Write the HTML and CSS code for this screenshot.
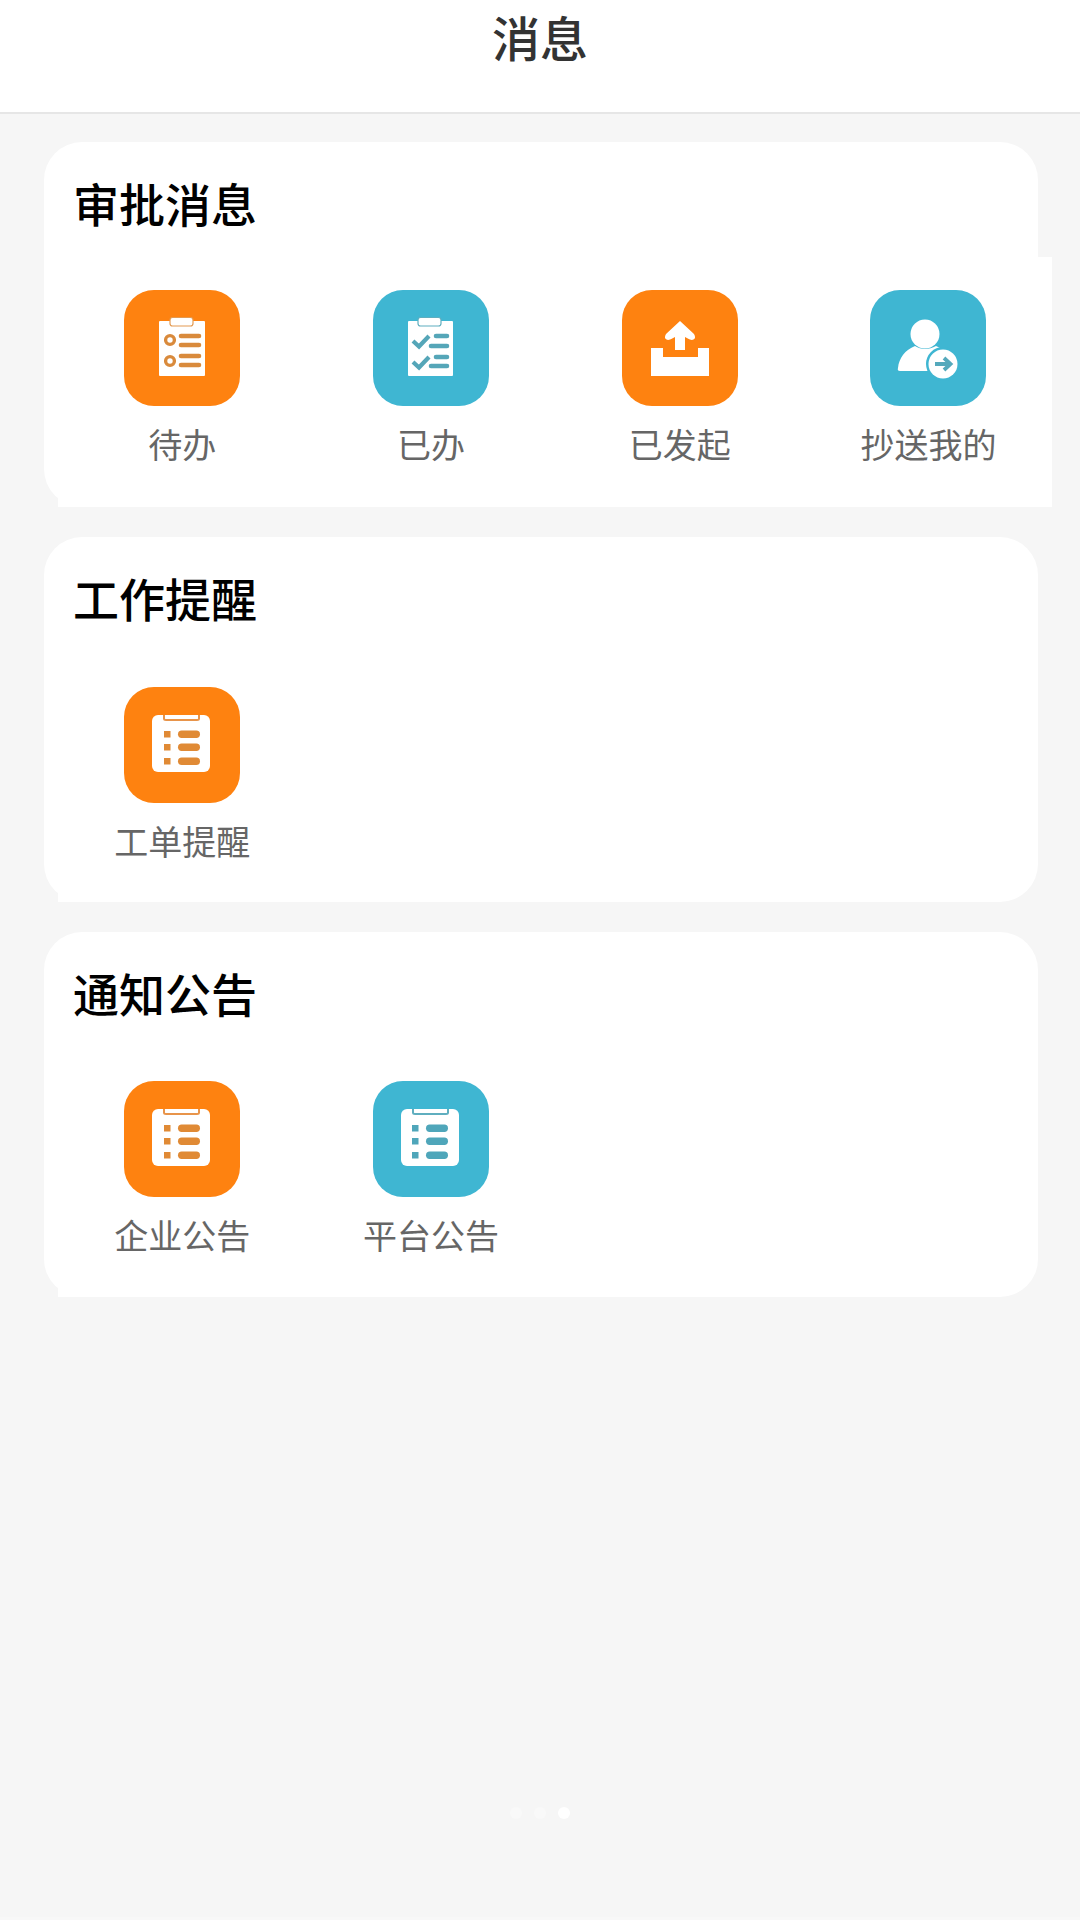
FILE: index.html
```html
<!DOCTYPE html>
<html lang="zh-CN">
<head>
<meta charset="utf-8">
<title>消息</title>
<link rel="stylesheet" href="styles.css">
</head>
<body>
<header class="topbar"><h1 class="topbar-title">消息</h1></header>
<main class="content">
  <section class="card">
    <h2 class="card-title">审批消息</h2>
    <div class="grid grid-wide">
      <div class="item">
        <svg class="tile tile-orange" viewBox="0 0 116 116">
          <rect x="35" y="31" width="46" height="55" rx="1" fill="#fff"/>
          <rect x="46" y="27.5" width="23" height="8.500" rx="2.500" fill="#fff" stroke="#e39a52" stroke-width="1.200"/>
          <g fill="none" stroke="#d98a3c" stroke-width="3.400"><circle cx="46" cy="50" r="4.400"/><circle cx="46" cy="71" r="4.400"/></g>
          <g stroke="#d98a3c" stroke-width="4.600" stroke-linecap="round"><path d="M57 46H75M57 55H75M57 66H75M57 75H75"/></g>
        </svg>
        <span class="label">待办</span>
      </div>
      <div class="item">
        <svg class="tile tile-teal" viewBox="0 0 116 116">
          <rect x="35" y="31" width="45" height="55" rx="1" fill="#fff"/>
          <rect x="45" y="27.5" width="23" height="8.500" rx="2.500" fill="#fff" stroke="#5faebf" stroke-width="1.200"/>
          <g fill="none" stroke="#55a6b8" stroke-width="4.200"><path d="M40 51L46 56.500L56 46M40 72L46 77.500L56 67"/></g>
          <g stroke="#55a6b8" stroke-width="4.600" stroke-linecap="round"><path d="M63 46H74M58 56H74M63 67H74M58 76H74"/></g>
        </svg>
        <span class="label">已办</span>
      </div>
      <div class="item">
        <svg class="tile tile-orange" viewBox="0 0 116 116">
          <path d="M29 58H41V67H76V58H87V86H29Z" fill="#fff"/>
          <path d="M58 31L72 44Q75 49 70 50Q68 50 63 47V60H53V47Q48 50 46 50Q41 49 44 44Z" fill="#fff"/>
        </svg>
        <span class="label">已发起</span>
      </div>
      <div class="item">
        <svg class="tile tile-teal" viewBox="0 0 116 116">
          <circle cx="55" cy="44" r="14.500" fill="#fff"/>
          <path d="M28 78C29 68 35 60 45 56C51 60 59 60 66 56C76 60 84 68 85 81H30Q27 81 28 78Z" fill="#fff"/>
          <circle cx="73" cy="74" r="17" fill="#3fb6d2"/>
          <circle cx="73" cy="74" r="14.500" fill="#fff"/>
          <path d="M65 74H80M74 68L80.500 74L74 80" fill="none" stroke="#55a9bc" stroke-width="3.800"/>
        </svg>
        <span class="label">抄送我的</span>
      </div>
    </div>
  </section>
  <section class="card card-alert">
    <h2 class="card-title">工作提醒</h2>
    <div class="grid">
      <div class="item">
        <svg class="tile tile-orange" viewBox="0 0 116 116">
          <rect x="28" y="28" width="58" height="57" rx="6" fill="#fff"/>
          <path d="M40 28V31.500Q40 33 42 33H73Q75 33 75 31.500V28" fill="none" stroke="#e8944a" stroke-width="2"/>
          <g fill="#e08a35"><rect x="40" y="44" width="6.500" height="6.500"/><rect x="40" y="57" width="6.500" height="6.500"/><rect x="40" y="71" width="6.500" height="6.500"/><rect x="54" y="43.500" width="22" height="7.500" rx="3.700"/><rect x="54" y="56.500" width="22" height="7.500" rx="3.700"/><rect x="54" y="70.500" width="22" height="7.500" rx="3.700"/></g>
        </svg>
        <span class="label">工单提醒</span>
      </div>
    </div>
  </section>
  <section class="card card-notice">
    <h2 class="card-title">通知公告</h2>
    <div class="grid">
      <div class="item">
        <svg class="tile tile-orange" viewBox="0 0 116 116">
          <rect x="28" y="28" width="58" height="57" rx="6" fill="#fff"/>
          <path d="M40 28V31.500Q40 33 42 33H73Q75 33 75 31.500V28" fill="none" stroke="#e8944a" stroke-width="2"/>
          <g fill="#e08a35"><rect x="40" y="44" width="6.500" height="6.500"/><rect x="40" y="57" width="6.500" height="6.500"/><rect x="40" y="71" width="6.500" height="6.500"/><rect x="54" y="43.500" width="22" height="7.500" rx="3.700"/><rect x="54" y="56.500" width="22" height="7.500" rx="3.700"/><rect x="54" y="70.500" width="22" height="7.500" rx="3.700"/></g>
        </svg>
        <span class="label">企业公告</span>
      </div>
      <div class="item">
        <svg class="tile tile-teal" viewBox="0 0 116 116">
          <rect x="28" y="28" width="58" height="57" rx="6" fill="#fff"/>
          <path d="M40 28V31.500Q40 33 42 33H73Q75 33 75 31.500V28" fill="none" stroke="#5faebf" stroke-width="2"/>
          <g fill="#4fa6ba"><rect x="39" y="44" width="6.500" height="6.500"/><rect x="39" y="57" width="6.500" height="6.500"/><rect x="39" y="71" width="6.500" height="6.500"/><rect x="53" y="43.500" width="22" height="7.500" rx="3.700"/><rect x="53" y="56.500" width="22" height="7.500" rx="3.700"/><rect x="53" y="70.500" width="22" height="7.500" rx="3.700"/></g>
        </svg>
        <span class="label">平台公告</span>
      </div>
    </div>
  </section>
  <div class="dots"><span class="dot"></span><span class="dot"></span><span class="dot dot-active"></span></div>
</main>
</body>
</html>
```
FILE: styles.css
```css
* { box-sizing: border-box; }
html, body { margin: 0; height: 100%; }
body {
  background: #f6f6f6;
  font-family: "Noto Sans CJK SC", "Noto Sans", sans-serif;
  display: flex;
  flex-direction: column;
  height: 1920px;
  overflow: hidden;
  border-bottom: 3px solid #f8f8f8;
}
.topbar {
  height: 114px;
  background: #fff;
  border-bottom: 2px solid #e6e6e6;
  display: flex;
  justify-content: center;
  flex: none;
}
.topbar-title {
  margin: 4px 0 0;
  font-size: 48px;
  line-height: 64px;
  font-weight: 500;
  color: #333;
}
.content {
  flex: 1;
  display: flex;
  flex-direction: column;
  padding-top: 28px;
}
.card {
  width: 994px;
  height: 365px;
  margin: 0 0 30px 44px;
  background: #fff;
  border-radius: 38px;
  display: flex;
  flex-direction: column;
}
.card-notice { margin-bottom: 0; }
.card-title {
  height: 115px;
  margin: 0;
  padding: 28px 0 0 29px;
  font-size: 46px;
  line-height: 64px;
  font-weight: 500;
  color: #000;
  flex: none;
}
.card-alert .card-title { height: 117px; }
.card-notice .card-title { height: 116px; }
.grid {
  flex: 1;
  margin-left: 14px;
  margin-right: 40px;
  display: grid;
  grid-template-columns: repeat(4, 248.700px);
  background: #fff;
}
.grid-wide { margin-right: -14px; }
.item {
  display: flex;
  flex-direction: column;
  align-items: center;
  padding-top: 33px;
}
.tile {
  width: 116px;
  height: 116px;
  border-radius: 30px;
  display: block;
  flex: none;
}
.tile-orange { background: #fe8210; }
.tile-teal { background: #3fb6d2; }
.label {
  margin-top: 14px;
  font-size: 34px;
  line-height: 48px;
  color: #666;
  white-space: nowrap;
}
.dots {
  margin-top: auto;
  margin-bottom: 98px;
  display: flex;
  justify-content: center;
  gap: 12px;
}
.dot {
  width: 12px;
  height: 12px;
  border-radius: 50%;
  background: #f9f9f9;
}
.dot-active { background: #fff; }
```
